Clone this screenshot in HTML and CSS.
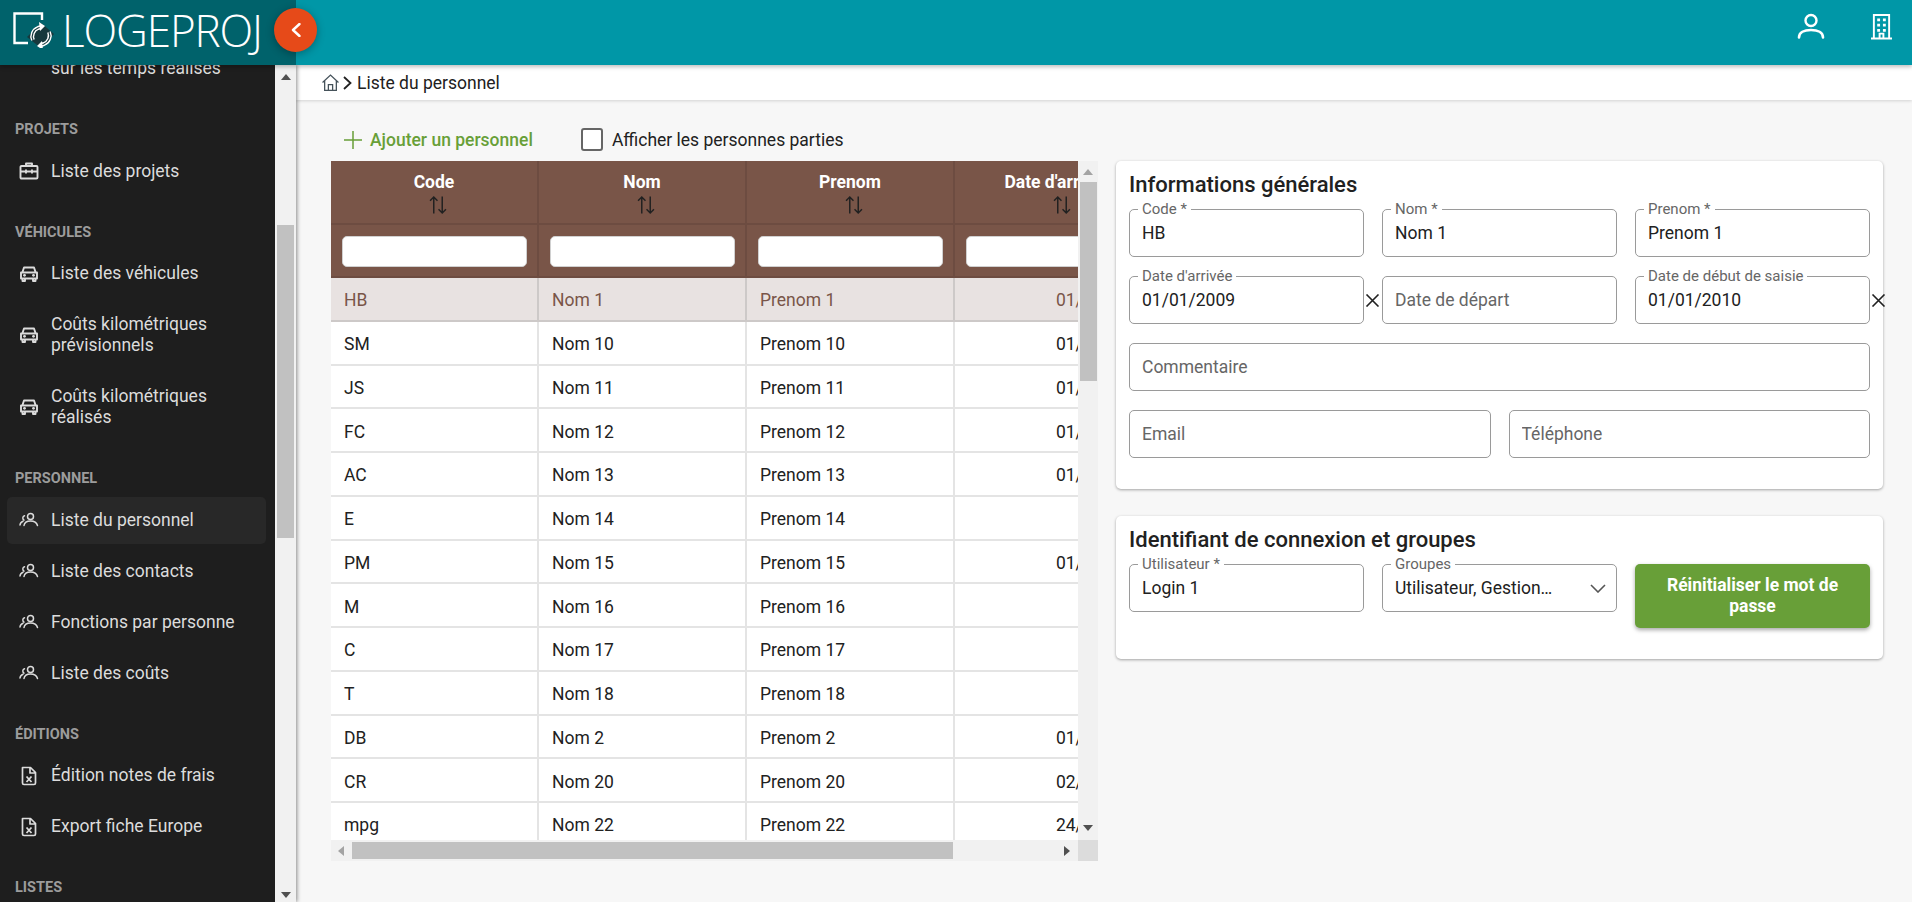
FILE: index.html
```html
<!DOCTYPE html>
<html lang="fr">
<head>
    <meta charset="UTF-8">
    <meta name="viewport" content="width=device-width, initial-scale=1.0">
    <title>Liste du personnel</title>
    <link rel="stylesheet" href="styles.css">
</head>
<body>
    <svg class="icon-defs" aria-hidden="true">
        <symbol id="i-case" viewBox="0 0 20 20"><path d="M7 5V2.500h6V5M2.500 5h15a1 1 0 0 1 1 1v10.500a1 1 0 0 1-1 1h-15a1 1 0 0 1-1-1V6a1 1 0 0 1 1-1zM1.500 10.500h17M7 8.500v4M13 8.500v4" fill="none" stroke="currentColor" stroke-width="1.900" stroke-linejoin="round"/></symbol>
        <symbol id="i-car" viewBox="0 0 20 20"><path d="M3.500 8 5 3.500h10L16.500 8M2 8.500h16v6H2zM3.500 14.500v2.500h2.500v-2.500M14 14.500v2.500h2.500v-2.500" fill="none" stroke="currentColor" stroke-width="1.900" stroke-linejoin="round"/><circle cx="5.500" cy="11.300" r="1.400" fill="currentColor"/><circle cx="14.500" cy="11.300" r="1.400" fill="currentColor"/></symbol>
        <symbol id="i-people" viewBox="0 0 20 20"><circle cx="11.500" cy="6.500" r="3" fill="none" stroke="currentColor" stroke-width="1.500"/><path d="M5 15.500c.5-3.500 3.500-4.500 6.500-4.500s6 1 7 4.500M5.500 5.700a2.500 2.500 0 0 0-.5 4.500M1 15c.2-2 1.300-3.200 3-3.800" fill="none" stroke="currentColor" stroke-width="1.500" stroke-linecap="round"/></symbol>
        <symbol id="i-file" viewBox="0 0 20 20"><path d="M3.500 1.500h8l5 5v10.500a1.500 1.500 0 0 1-1.500 1.500H5a1.500 1.500 0 0 1-1.500-1.500zM11 1.500v5.500h5.500" fill="none" stroke="currentColor" stroke-width="1.700" stroke-linejoin="round"/><path d="M7.500 10.500l5 5.500M12.500 10.500l-5 5.500" fill="none" stroke="currentColor" stroke-width="1.800"/></symbol>
        <symbol id="i-sort" viewBox="0 0 17 17"><path d="M4.500 16.500V1M1 4.500 4.500 1 8 4.500M12.500.5V16M9 12.500l3.500 3.500 3.500-3.500" fill="none" stroke="currentColor" stroke-width="1.400"/></symbol>
        <symbol id="i-x" viewBox="0 0 15 13"><path d="M1.500.5l12 12M13.500.5l-12 12" fill="none" stroke="currentColor" stroke-width="1.600"/></symbol>
    </svg>

    <header class="topbar">
        <div class="brand">
            <svg class="brand-icon" viewBox="0 0 42 36" aria-hidden="true">
                <path d="M29 8V1.500H1.500v29.500H15" fill="none" stroke="#fff" stroke-width="2.400"/>
                <path d="M14 25 28 11l13 11-13 14z" fill="#17383c"/>
                <path d="M20 28a9 9 0 0 1 5-12l3-1M36 20a9 9 0 0 1-5 12l-3 1" fill="none" stroke="#fff" stroke-width="4"/>
                <path d="M20 28a9 9 0 0 1 5-12l3-1M36 20a9 9 0 0 1-5 12l-3 1" fill="none" stroke="#17383c" stroke-width="1.200"/>
                <path d="M26 10l6 4-5 5zM30 38l-6-4 5-5z" fill="#fff"/>
            </svg>
            <span class="brand-name">LOGEPROJ</span>
        </div>
        <button class="collapse-btn" aria-label="Réduire le menu">
            <svg viewBox="0 0 10 14" width="10" height="14"><path d="M8.500 1 2 7l6.500 6" fill="none" stroke="#fff" stroke-width="2.400" stroke-linecap="round" stroke-linejoin="round"/></svg>
        </button>
        <div class="topbar-actions">
            <svg class="top-icon user-icon" viewBox="0 0 28 26"><circle cx="14" cy="7.500" r="5.500" fill="none" stroke="#fff" stroke-width="2.400"/><path d="M2 24.500c0-5 5-7.500 12-7.500s12 2.500 12 7.500" fill="none" stroke="#fff" stroke-width="2.600" stroke-linecap="round"/></svg>
            <svg class="top-icon building-icon" viewBox="0 0 22 27"><path d="M3 26V1.500h16V26M0 26h22M9 26v-5h4v5" fill="none" stroke="#fff" stroke-width="2"/><path d="M6.500 5h3v3h-3zM12.500 5h3v3h-3zM6.500 10.500h3v3h-3zM12.500 10.500h3v3h-3zM6.500 16h3v3h-3zM12.500 16h3v3h-3z" fill="#fff"/></svg>
        </div>
    </header>

    <div class="layout">
        <aside class="sidebar">
            <nav class="side-menu">
                <div class="menu-cut">sur les temps réalisés</div>

                <h4 class="menu-title">PROJETS</h4>
                <a class="menu-item"><svg class="menu-icon"><use href="#i-case"/></svg>Liste des projets</a>

                <h4 class="menu-title">VÉHICULES</h4>
                <a class="menu-item"><svg class="menu-icon"><use href="#i-car"/></svg>Liste des véhicules</a>
                <a class="menu-item tall"><svg class="menu-icon"><use href="#i-car"/></svg><span>Coûts kilométriques prévisionnels</span></a>
                <a class="menu-item tall"><svg class="menu-icon"><use href="#i-car"/></svg><span>Coûts kilométriques réalisés</span></a>

                <h4 class="menu-title">PERSONNEL</h4>
                <a class="menu-item active"><svg class="menu-icon"><use href="#i-people"/></svg>Liste du personnel</a>
                <a class="menu-item"><svg class="menu-icon"><use href="#i-people"/></svg>Liste des contacts</a>
                <a class="menu-item"><svg class="menu-icon"><use href="#i-people"/></svg>Fonctions par personne</a>
                <a class="menu-item"><svg class="menu-icon"><use href="#i-people"/></svg>Liste des coûts</a>

                <h4 class="menu-title">ÉDITIONS</h4>
                <a class="menu-item"><svg class="menu-icon"><use href="#i-file"/></svg>Édition notes de frais</a>
                <a class="menu-item"><svg class="menu-icon"><use href="#i-file"/></svg>Export fiche Europe</a>

                <h4 class="menu-title">LISTES</h4>
            </nav>
            <div class="side-scroll">
                <span class="arrow up dark"></span>
                <span class="side-thumb"></span>
                <span class="arrow down dark"></span>
            </div>
        </aside>

        <main class="main">
            <div class="crumbs">
                <svg class="crumb-home" viewBox="0 0 16 16"><path d="M.5 8 8 1l7.500 7M2.500 6.500V15.500h11V6.500M6 15.500V10h4v5.500" fill="none" stroke="#45525a" stroke-width="1.200"/></svg>
                <svg class="crumb-sep" viewBox="0 0 9 14"><path d="M1 1l6.500 6L1 13" fill="none" stroke="#212121" stroke-width="1.800"/></svg>
                <span>Liste du personnel</span>
            </div>

            <div class="content">
                <div class="toolbar">
                    <a class="add-link">
                        <svg viewBox="0 0 18 18" width="18" height="18"><path d="M9 0v18M0 9h18" stroke="#689f38" stroke-width="1.500"/></svg>
                        Ajouter un personnel
                    </a>
                    <label class="check">
                        <input type="checkbox">
                        Afficher les personnes parties
                    </label>
                </div>

                <div class="panels">
                    <section class="grid-box">
                        <div class="grid-view">
                            <table class="data-table">
                                <thead>
                                    <tr class="head-row">
                                        <th>Code<svg class="sort"><use href="#i-sort"/></svg></th>
                                        <th>Nom<svg class="sort"><use href="#i-sort"/></svg></th>
                                        <th>Prenom<svg class="sort"><use href="#i-sort"/></svg></th>
                                        <th>Date d'arrivée<svg class="sort"><use href="#i-sort"/></svg></th>
                                    </tr>
                                    <tr class="filter-row">
                                        <th><input type="text"></th>
                                        <th><input type="text"></th>
                                        <th><input type="text"></th>
                                        <th><input type="text"></th>
                                    </tr>
                                </thead>
                                <tbody>
                                    <tr class="selected"><td>HB</td><td>Nom 1</td><td>Prenom 1</td><td class="date">01/01/2009</td></tr>
                                    <tr><td>SM</td><td>Nom 10</td><td>Prenom 10</td><td class="date">01/01/2009</td></tr>
                                    <tr><td>JS</td><td>Nom 11</td><td>Prenom 11</td><td class="date">01/01/2009</td></tr>
                                    <tr><td>FC</td><td>Nom 12</td><td>Prenom 12</td><td class="date">01/01/2009</td></tr>
                                    <tr><td>AC</td><td>Nom 13</td><td>Prenom 13</td><td class="date">01/01/2009</td></tr>
                                    <tr><td>E</td><td>Nom 14</td><td>Prenom 14</td><td class="date"></td></tr>
                                    <tr><td>PM</td><td>Nom 15</td><td>Prenom 15</td><td class="date">01/01/2009</td></tr>
                                    <tr><td>M</td><td>Nom 16</td><td>Prenom 16</td><td class="date"></td></tr>
                                    <tr><td>C</td><td>Nom 17</td><td>Prenom 17</td><td class="date"></td></tr>
                                    <tr><td>T</td><td>Nom 18</td><td>Prenom 18</td><td class="date"></td></tr>
                                    <tr><td>DB</td><td>Nom 2</td><td>Prenom 2</td><td class="date">01/01/2009</td></tr>
                                    <tr><td>CR</td><td>Nom 20</td><td>Prenom 20</td><td class="date">02/01/2009</td></tr>
                                    <tr><td>mpg</td><td>Nom 22</td><td>Prenom 22</td><td class="date">24/01/2009</td></tr>
                                </tbody>
                            </table>
                        </div>
                        <div class="v-scroll">
                            <span class="arrow up"></span>
                            <span class="v-thumb"></span>
                            <span class="arrow down dark"></span>
                        </div>
                        <div class="h-scroll">
                            <span class="arrow left"></span>
                            <span class="h-thumb"></span>
                            <span class="arrow right dark"></span>
                        </div>
                        <div class="corner"></div>
                    </section>

                    <div class="forms">
                        <section class="card">
                            <h3>Informations générales</h3>
                            <div class="form-grid three">
                                <div class="field"><span class="field-label">Code *</span><input type="text" value="HB"></div>
                                <div class="field"><span class="field-label">Nom *</span><input type="text" value="Nom 1"></div>
                                <div class="field"><span class="field-label">Prenom *</span><input type="text" value="Prenom 1"></div>
                                <div class="field"><span class="field-label">Date d'arrivée</span><input type="text" value="01/01/2009"><svg class="clear"><use href="#i-x"/></svg></div>
                                <div class="field"><input type="text" placeholder="Date de départ"></div>
                                <div class="field"><span class="field-label">Date de début de saisie</span><input type="text" value="01/01/2010"><svg class="clear"><use href="#i-x"/></svg></div>
                            </div>
                            <div class="form-grid">
                                <div class="field"><input type="text" placeholder="Commentaire"></div>
                            </div>
                            <div class="form-grid two">
                                <div class="field"><input type="text" placeholder="Email"></div>
                                <div class="field"><input type="text" placeholder="Téléphone"></div>
                            </div>
                        </section>

                        <section class="card">
                            <h3>Identifiant de connexion et groupes</h3>
                            <div class="form-grid three">
                                <div class="field"><span class="field-label">Utilisateur *</span><input type="text" value="Login 1"></div>
                                <div class="field select"><span class="field-label">Groupes</span><span class="select-value">Utilisateur, Gestionnaire</span>
                                    <svg viewBox="0 0 16 9" width="16" height="9"><path d="M1 1l7 7 7-7" fill="none" stroke="#555" stroke-width="1.600"/></svg>
                                </div>
                                <button class="reset-btn">Réinitialiser le mot de passe</button>
                            </div>
                        </section>
                    </div>
                </div>
            </div>
        </main>
    </div>
</body>
</html>
```

FILE: styles.css
```css
* {
    box-sizing: border-box;
}
html, body {
    height: 100%;
}
body {
    margin: 0;
    font-family: 'Roboto', 'Liberation Sans', sans-serif;
    font-size: 17.500px;
    color: #212121;
    background: #f7f7f7;
    overflow: hidden;
}
.icon-defs {
    display: none;
}

/* top bar */
.topbar {
    position: relative;
    z-index: 3;
    display: flex;
    align-items: stretch;
    height: 65px;
    background: #0097a7;
    box-shadow: 0 2px 4px rgba(0, 0, 0, 0.25);
}
.brand {
    display: flex;
    align-items: center;
    gap: 7px;
    width: 296px;
    padding: 0 0 5px 13px;
    background: #00626b;
}
.brand-icon {
    width: 42px;
    height: 36px;
}
.brand-name {
    font-family: 'Open Sans', 'Lato', sans-serif;
    font-weight: 300;
    font-size: 44px;
    line-height: 1;
    letter-spacing: -1.100px;
    color: #fff;
}
.collapse-btn {
    position: absolute;
    left: 274px;
    top: 8px;
    width: 43px;
    height: 44px;
    padding: 0;
    border: none;
    border-radius: 50%;
    background: #e64a19;
    box-shadow: 0 2px 8px rgba(0, 0, 0, 0.3);
    display: flex;
    align-items: center;
    justify-content: center;
}
.topbar-actions {
    margin-left: auto;
    display: flex;
    align-items: flex-start;
    gap: 46px;
    padding: 13px 20px 0 0;
}
.user-icon {
    width: 28px;
    height: 26px;
}
.building-icon {
    width: 21px;
    height: 27px;
}

/* page */
.layout {
    display: flex;
    height: calc(100% - 65px);
}
.sidebar {
    position: relative;
    z-index: 2;
    display: flex;
    width: 296px;
    flex-shrink: 0;
    box-shadow: 1px 0 4px rgba(0, 0, 0, 0.45);
}
.side-menu {
    width: 275px;
    background: #1e1e1e;
    overflow: hidden;
    color: #dcdcdc;
}
.menu-cut {
    margin: -7px 0 0 51px;
    line-height: 21px;
}
.menu-title {
    margin: 0 0 7.500px;
    padding: 24px 0 0 15px;
    font-size: 14.500px;
    line-height: 20px;
    font-weight: 700;
    color: #9c9c9c;
}
.menu-cut + .menu-title {
    padding-top: 41px;
}
.menu-item {
    display: flex;
    align-items: center;
    gap: 12px;
    width: 259px;
    height: 47px;
    margin: 0 0 4px 7px;
    padding: 0 8px 0 12px;
    line-height: 21px;
    border-radius: 5px;
}
.menu-item.tall {
    height: 68px;
}
.menu-item.active {
    background: #282828;
}
.menu-icon {
    width: 20px;
    height: 20px;
    flex-shrink: 0;
}

/* fake scrollbars */
.side-scroll {
    position: relative;
    width: 21px;
    background: #f1f1f1;
    padding: 160px 2px 0;
}
.side-thumb {
    display: block;
    height: 313px;
    background: #c1c1c1;
}
.arrow {
    position: absolute;
    width: 0;
    height: 0;
    border: 5px solid transparent;
}
.arrow.up {
    border-top: none;
    border-bottom: 6px solid #a3a3a3;
}
.arrow.down {
    border-bottom: none;
    border-top: 6px solid #a3a3a3;
}
.arrow.left {
    border-left: none;
    border-right: 6px solid #a3a3a3;
}
.arrow.right {
    border-right: none;
    border-left: 6px solid #a3a3a3;
}
.arrow.up.dark {
    border-bottom-color: #505050;
}
.arrow.down.dark {
    border-top-color: #505050;
}
.arrow.right.dark {
    border-left-color: #505050;
}
.side-scroll .arrow.up {
    top: 9px;
    left: 6px;
}
.side-scroll .arrow.down {
    bottom: 4px;
    left: 6px;
}

.main {
    flex: 1;
    min-width: 0;
}
.crumbs {
    display: flex;
    align-items: center;
    height: 35px;
    padding-left: 26px;
    background: #fff;
    box-shadow: 0 1px 3px rgba(0, 0, 0, 0.15);
}
.crumb-home {
    width: 17px;
    height: 17px;
}
.crumb-sep {
    width: 9px;
    height: 14px;
    margin: 0 5px 0 4px;
}
.content {
    padding: 28px 29px 0 35px;
}
.toolbar {
    display: flex;
    align-items: center;
    gap: 48px;
    height: 23px;
    margin-bottom: 10px;
    padding-left: 13px;
}
.add-link {
    display: flex;
    align-items: center;
    gap: 8px;
    color: #689f38;
    font-weight: 500;
}
.check {
    display: flex;
    align-items: center;
    gap: 9px;
}
.check input {
    appearance: none;
    width: 22px;
    height: 23px;
    margin: 0;
    background: #fff;
    border: 2px solid #666;
    border-radius: 3px;
}
.panels {
    display: grid;
    grid-template-columns: 1fr 1fr;
    gap: 18px;
    align-items: start;
}

/* table */
.grid-box {
    display: grid;
    grid-template-columns: 747px 20px;
    grid-template-rows: 679px 21px;
}
.grid-view {
    overflow: hidden;
    background: #fff;
}
.data-table {
    table-layout: fixed;
    width: 832px;
    border-collapse: separate;
    border-spacing: 0;
}
.data-table th:nth-child(1),
.data-table td:nth-child(1),
.data-table th:nth-child(2),
.data-table td:nth-child(2),
.data-table th:nth-child(3),
.data-table td:nth-child(3) {
    width: 208px;
}
.data-table th {
    background: #795548;
    color: #fff;
    border-right: 2px solid #6d4c41;
    border-bottom: 2px solid #6d4c41;
    font-weight: 700;
    white-space: nowrap;
}
.head-row th {
    height: 64px;
    padding: 1px 0 0;
    line-height: 22px;
    vertical-align: middle;
}
.sort {
    display: block;
    width: 18px;
    height: 18px;
    margin: 3px auto 0;
    color: #212121;
    transform: translateX(4px);
}
.filter-row th {
    height: 53px;
    padding: 2px 10px 0 11px;
}
.filter-row input {
    display: block;
    width: 100%;
    height: 31px;
    border: 1px solid #d0d0d0;
    border-radius: 5px;
    background: #fff;
}
.data-table td {
    height: 43.750px;
    padding: 3px 12px 0 13px;
    border-right: 2px solid #e4e4e4;
    border-bottom: 2px solid #e4e4e4;
    white-space: nowrap;
}
.data-table td.date {
    text-align: right;
}
.selected td {
    background: #e8e2e1;
    color: #795548;
    border-color: #cdc9c8;
}

.v-scroll {
    position: relative;
    background: #f1f1f1;
    padding: 21px 1px 0 2px;
}
.v-thumb {
    display: block;
    height: 199px;
    background: #c1c1c1;
}
.v-scroll .arrow.up {
    top: 8px;
    left: 5px;
}
.v-scroll .arrow.down {
    bottom: 9px;
    left: 5px;
}
.h-scroll {
    position: relative;
    background: #f1f1f1;
    padding: 2px 0 2px 21px;
}
.h-thumb {
    display: block;
    width: 601px;
    height: 17px;
    background: #c1c1c1;
}
.h-scroll .arrow.left {
    top: 6px;
    left: 7px;
}
.h-scroll .arrow.right {
    top: 6px;
    right: 8px;
}
.corner {
    background: #dcdcdc;
}

/* forms */
.forms {
    display: flex;
    flex-direction: column;
    gap: 27px;
}
.card {
    background: #fff;
    border-radius: 5px;
    padding: 11px 13px 31px;
    box-shadow: 0 1px 3px rgba(0, 0, 0, 0.35);
}
.card h3 {
    margin: 0 0 11px;
    font-size: 22px;
    line-height: 26px;
    font-weight: 500;
    color: #212121;
}
.form-grid {
    display: grid;
    gap: 19px 18px;
    margin-bottom: 19px;
}
.form-grid:last-child {
    margin-bottom: 0;
}
.form-grid.three {
    grid-template-columns: repeat(3, 1fr);
    align-items: start;
}
.form-grid.two {
    grid-template-columns: 1fr 1fr;
}
.field {
    position: relative;
    display: flex;
    align-items: center;
    height: 48px;
    border: 1px solid #9a9a9a;
    border-radius: 5px;
    background: #fff;
}
.field input {
    width: 100%;
    height: 100%;
    padding: 0 12px 0 12px;
    border: none;
    outline: none;
    background: transparent;
    border-radius: 5px;
    font: inherit;
    color: #212121;
}
.field input::placeholder {
    color: #666;
    opacity: 1;
}
.field-label {
    position: absolute;
    left: 8px;
    top: -9px;
    padding: 0 4px;
    background: #fff;
    font-size: 15px;
    line-height: 16px;
    color: #666;
    white-space: nowrap;
}
.clear {
    position: absolute;
    right: -17px;
    top: 17px;
    width: 15px;
    height: 13px;
    color: #212121;
}
.select {
    justify-content: space-between;
    padding: 0 10px 0 12px;
}
.select-value {
    width: 160px;
    overflow: hidden;
    white-space: nowrap;
    text-overflow: ellipsis;
}
.reset-btn {
    height: 64px;
    padding: 0 20px;
    border: none;
    border-radius: 5px;
    background: #689f38;
    color: #fff;
    font: inherit;
    font-weight: 700;
    line-height: 21px;
    box-shadow: 0 2px 4px rgba(0, 0, 0, 0.35);
}
```
